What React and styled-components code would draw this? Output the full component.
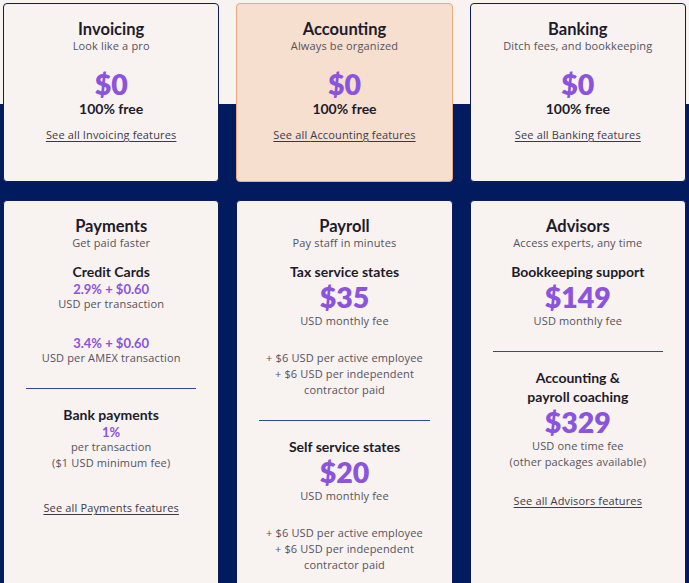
import React from 'react';
import styled, { createGlobalStyle, css } from 'styled-components';

const GlobalStyle = createGlobalStyle`
  body {
    margin: 0;
    background: #021a5e;
    font-family: "Open Sans", "Liberation Sans", sans-serif;
  }
`;

const Page = styled.div`
  background: linear-gradient(#f8f3f1 0, #f8f3f1 104px, #021a5e 104px);
  padding: 3px 3px 0;
  min-height: 583px;
`;

const Grid = styled.div`
  display: grid;
  grid-template-columns: repeat(3, 1fr);
  column-gap: 17px;
  row-gap: 18px;
`;

const Card = styled.div`
  background: #f8f3f1;
  border-radius: 4px;
  border: 1px solid #0d1d5c;
  box-sizing: border-box;
  display: flex;
  flex-direction: column;
  align-items: center;
  text-align: center;
  padding: 16px 18px 24px;
  ${(props) =>
    props.$top &&
    css`
      height: 179px;
    `}
  ${(props) =>
    props.$highlight &&
    css`
      background: #f7dfd0;
      border-color: #e9a985;
    `}
`;

const Title = styled.h2`
  margin: 0;
  font-family: Lato, "Noto Sans", sans-serif;
  font-weight: 700;
  font-size: 16.5px;
  line-height: 18px;
  color: #1e1b2b;
`;

const Text = styled.p`
  margin: 0;
  font-size: 11px;
  line-height: 16px;
  color: #55525c;
  letter-spacing: 0.15px;
`;

const Extras = styled(Text)`
  margin-top: 21px;
`;

const Heading = styled.h3`
  margin: 11px 0 0;
  font-family: Lato, "Noto Sans", sans-serif;
  font-weight: 700;
  font-size: 14px;
  line-height: 19px;
  color: #1e1b2b;
  ${(props) =>
    props.$afterRule &&
    css`
      margin-top: 16px;
    `}
`;

const Price = styled.div`
  font-family: Lato, "Noto Sans", sans-serif;
  font-weight: 800;
  font-size: 28.5px;
  line-height: 32px;
  color: #8b54dc;
  margin-top: ${(props) => props.$gap || 0}px;
`;

const Rate = styled.div`
  font-family: Lato, "Noto Sans", sans-serif;
  font-weight: 700;
  font-size: 13px;
  line-height: 14px;
  color: #8b54dc;
  margin-top: ${(props) => props.$gap || 1}px;
`;

const Free = styled.div`
  font-family: Lato, "Noto Sans", sans-serif;
  font-weight: 700;
  font-size: 14px;
  line-height: 18px;
  color: #1e1b2b;
`;

const Rule = styled.hr`
  align-self: stretch;
  margin: 22px 4px 0;
  border: 0;
  border-top: 1px solid #2d4a98;
`;

const Link = styled.a`
  display: block;
  margin-top: ${(props) => props.$gap}px;
  font-size: 11px;
  line-height: 16px;
  color: #3d3a48;
  text-decoration: underline;
  text-underline-offset: 2px;
  letter-spacing: 0.15px;
  cursor: pointer;
`;

const topCards = [
  { name: 'Invoicing', tag: 'Look like a pro' },
  { name: 'Accounting', tag: 'Always be organized', highlight: true },
  { name: 'Banking', tag: 'Ditch fees, and bookkeeping' },
];

function PlanCard({ name, tag, highlight }) {
  return (
    <Card $top $highlight={highlight}>
      <Title>{name}</Title>
      <Text>{tag}</Text>
      <Price $gap={14}>$0</Price>
      <Free>100% free</Free>
      <Link $gap={9}>See all {name} features</Link>
    </Card>
  );
}

function Payroll({ label, price, gap }) {
  return (
    <>
      <Heading $afterRule={gap}>{label}</Heading>
      <Price>{price}</Price>
      <Text>USD monthly fee</Text>
      <Extras>
        + $6 USD per active employee
        <br />+ $6 USD per independent
        <br />
        contractor paid
      </Extras>
    </>
  );
}

export default function App() {
  return (
    <Page>
      <GlobalStyle />
      <Grid>
        {topCards.map((c) => (
          <PlanCard key={c.name} {...c} />
        ))}

        <Card>
          <Title>Payments</Title>
          <Text>Get paid faster</Text>
          <Heading>Credit Cards</Heading>
          <Rate>2.9% + $0.60</Rate>
          <Text>USD per transaction</Text>
          <Rate $gap={24}>3.4% + $0.60</Rate>
          <Text>USD per AMEX transaction</Text>
          <Rule />
          <Heading $afterRule>Bank payments</Heading>
          <Rate>1%</Rate>
          <Text>per transaction</Text>
          <Text>($1 USD minimum fee)</Text>
          <Link $gap={29}>See all Payments features</Link>
        </Card>

        <Card>
          <Title>Payroll</Title>
          <Text>Pay staff in minutes</Text>
          <Payroll label="Tax service states" price="$35" />
          <Rule />
          <Payroll label="Self service states" price="$20" gap />
        </Card>

        <Card>
          <Title>Advisors</Title>
          <Text>Access experts, any time</Text>
          <Heading>Bookkeeping support</Heading>
          <Price>$149</Price>
          <Text>USD monthly fee</Text>
          <Rule />
          <Heading $afterRule>
            Accounting &amp;
            <br />
            payroll coaching
          </Heading>
          <Price>$329</Price>
          <Text>USD one time fee</Text>
          <Text>(other packages available)</Text>
          <Link $gap={23}>See all Advisors features</Link>
        </Card>
      </Grid>
    </Page>
  );
}
